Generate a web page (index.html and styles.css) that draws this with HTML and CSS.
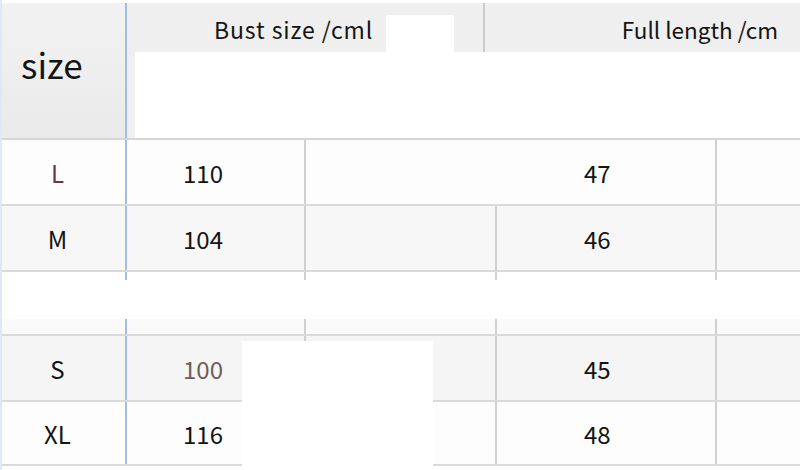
FILE: index.html
```html
<!DOCTYPE html>
<html lang="en">
<head>
<meta charset="utf-8">
<title>Size chart</title>
<link rel="stylesheet" href="styles.css">
</head>
<body>
<div class="page">
  <div class="head">
    <div class="size-cell">size</div>
    <div class="head-right">
      <div class="band">
        <div class="band-a"><span class="band-text bust">Bust size /cml</span><span class="patch"></span></div>
        <div class="band-b"><span class="band-text">Full length /cm</span></div>
      </div>
      <div class="head-blank"></div>
    </div>
  </div>

  <div class="section">
    <div class="row row-l">
      <div class="c c1 maroon">L</div>
      <div class="c c2">110</div>
      <div class="c c3"></div>
      <div class="c c4 nob">47</div>
      <div class="c c5"></div>
    </div>
    <div class="row row-m">
      <div class="c c1">M</div>
      <div class="c c2">104</div>
      <div class="c c3"></div>
      <div class="c c4">46</div>
      <div class="c c5"></div>
    </div>
    <div class="row strip">
      <div class="c c1"></div>
      <div class="c c2"></div>
      <div class="c c3"></div>
      <div class="c c4"></div>
      <div class="c c5"></div>
    </div>
  </div>

  <div class="gap"></div>

  <div class="section second">
    <div class="row strip-top">
      <div class="c c1"></div>
      <div class="c c2"></div>
      <div class="c c3"></div>
      <div class="c c4"></div>
      <div class="c c5"></div>
    </div>
    <div class="row row-s">
      <div class="c c1">S</div>
      <div class="c c2 brown">100</div>
      <div class="c c3"></div>
      <div class="c c4">45</div>
      <div class="c c5"></div>
    </div>
    <div class="row row-xl">
      <div class="c c1">XL</div>
      <div class="c c2">116</div>
      <div class="c c3"></div>
      <div class="c c4">48</div>
      <div class="c c5"></div>
    </div>
    <div class="cover"></div>
  </div>
</div>
</body>
</html>
```

FILE: styles.css
```css
* { box-sizing: border-box; }
html, body { margin: 0; padding: 0; background: #ffffff; }
body {
  width: 800px;
  height: 470px;
  overflow: hidden;
  font-family: "Noto Sans CJK SC", "Noto Sans", sans-serif;
  color: #141414;
}
.page {
  border-left: 2px solid #dfe9f5;
  height: 470px;
  padding-top: 3px;
}

/* header */
.head {
  display: grid;
  grid-template-columns: 123px 1fr;
  height: 137px;
  border-bottom: 2px solid #d6d6d6;
}
.size-cell {
  background: linear-gradient(#f2f2f2, #eaeaea);
  font-size: 35px;
  display: flex;
  align-items: center;
  padding-left: 19px;
  padding-bottom: 14px;
}
.head-right {
  border-left: 2px solid #9fbfe7;
  background: #efefef;
  display: grid;
  grid-template-rows: 49px 1fr;
}
.band {
  display: flex;
  align-items: stretch;
}
.band-a {
  width: 356px;
  display: flex;
  align-items: flex-end;
  padding-left: 87px;
}
.band-text {
  font-size: 22.5px;
  align-self: center;
  padding-top: 2px;
}
.band-text.bust {
  font-size: 23px;
  letter-spacing: 0.9px;
}
.patch {
  width: 68px;
  height: 37px;
  margin-left: 13px;
  background: #ffffff;
}
.band-b {
  flex: 1;
  border-left: 2px solid #cbcbcb;
  display: flex;
  justify-content: flex-end;
  padding-right: 22px;
}
.head-blank {
  margin-left: 8px;
  background: #ffffff;
}

/* rows */
.row {
  display: grid;
  grid-template-columns: 123px 179px 191px 220px 85px;
  height: 66px;
  border-bottom: 2px solid #dadada;
}
.c {
  display: flex;
  align-items: center;
  font-size: 24px;
}
.c1 {
  justify-content: center;
  padding-right: 12px;
}
.c2 {
  border-left: 2px solid #9fbfe7;
  padding-left: 56px;
}
.c3 { border-left: 2px solid #d0d0d0; }
.c4 {
  border-left: 2px solid #d0d0d0;
  padding-left: 87px;
}
.c5 { border-left: 2px solid #d0d0d0; }
.c4.nob { border-left-color: transparent; }

.row-l { background: #fdfdfd; }
.row-m { background: #f7f7f7; }
.row-s { background: #f5f5f5; height: 66px; }
.row-xl { background: #fdfdfd; height: 64px; }

.strip {
  height: 8px;
  border-bottom: none;
  background: #ffffff;
}

.gap { height: 39px; }

.second { position: relative; }
.strip-top {
  height: 17px;
  background: #fafafa;
}

.cover {
  position: absolute;
  left: 240px;
  top: 22px;
  width: 191px;
  height: 140px;
  background: #ffffff;
}

.maroon { color: #6b3446; }
.brown { color: #6f5d5d; }
```
